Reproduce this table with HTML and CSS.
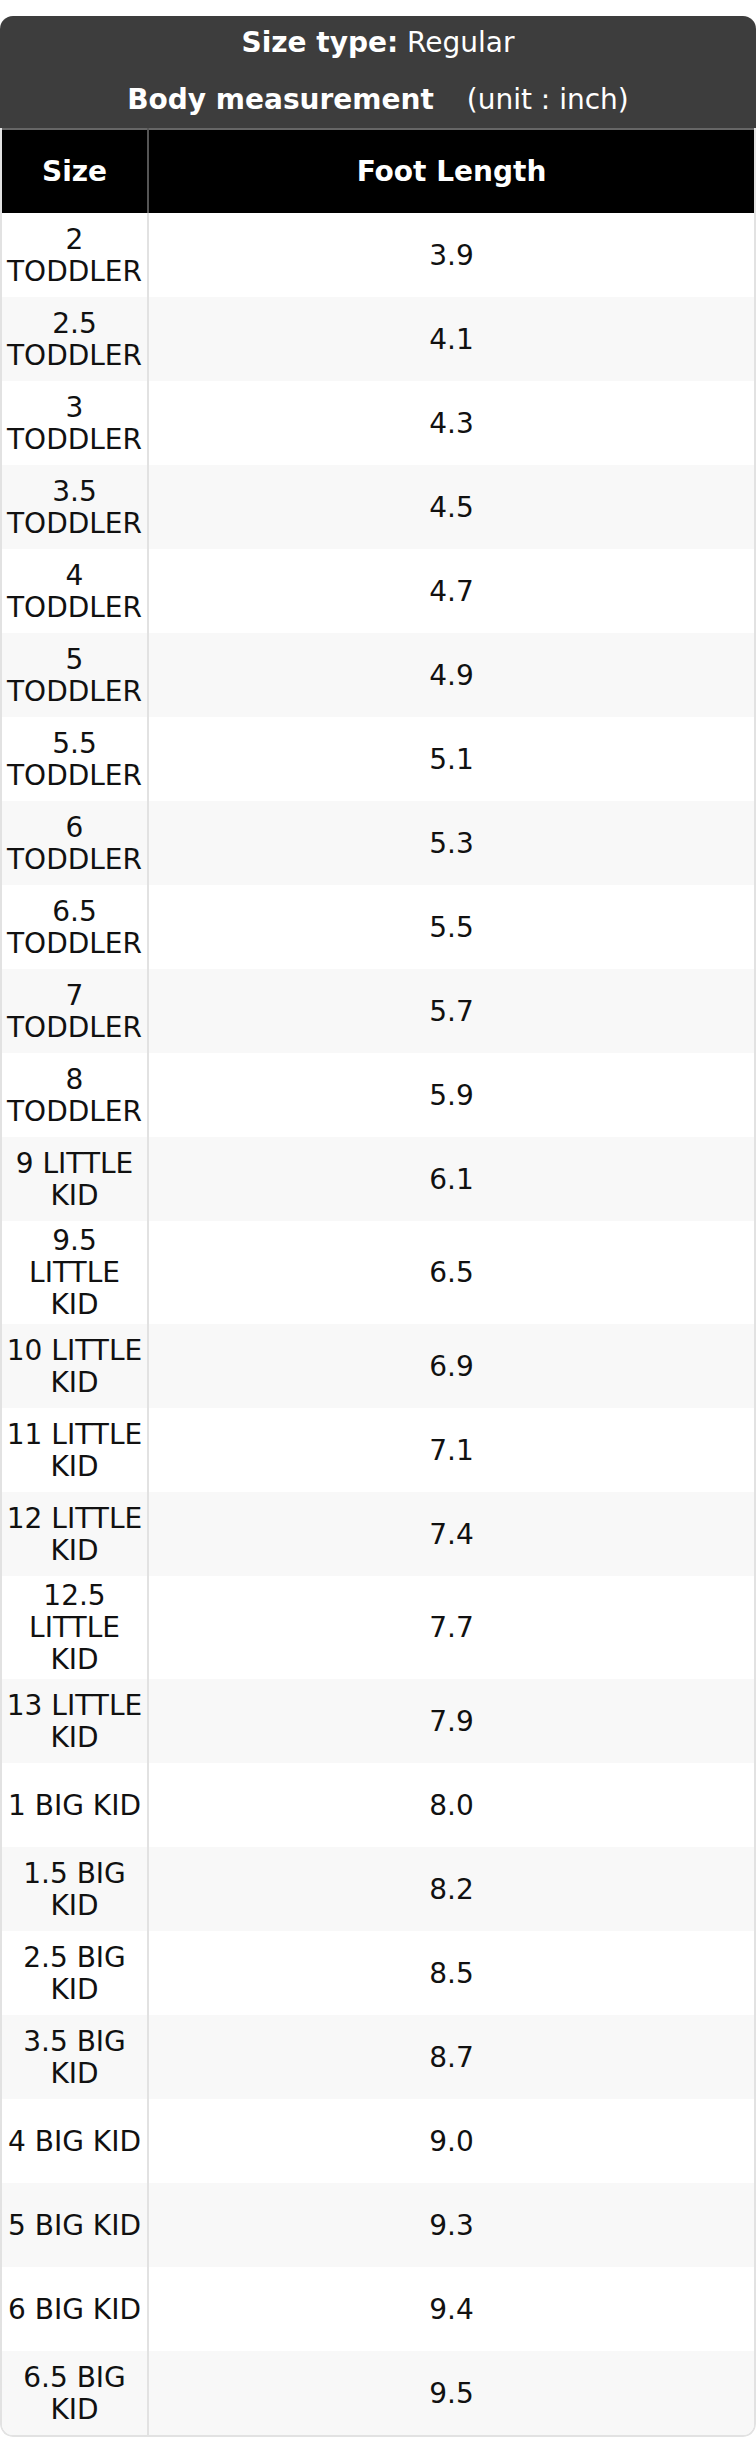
FILE: index.html
```html
<!DOCTYPE html>
<html lang="en">
<head>
<meta charset="utf-8">
<title>Size chart</title>
<link rel="stylesheet" href="styles.css">
</head>
<body>
<div class="card">
  <div class="title">
    <div class="title-line"><b>Size type:</b> Regular</div>
    <div class="title-line"><b>Body measurement</b> <span class="unit">(unit : inch)</span></div>
  </div>
  <div class="table-wrap">
    <table class="chart">
      <colgroup><col class="c-size"><col class="c-len"></colgroup>
      <thead>
        <tr><th>Size</th><th>Foot Length</th></tr>
      </thead>
      <tbody>
        <tr><td>2 TODDLER</td><td>3.9</td></tr>
        <tr><td>2.5 TODDLER</td><td>4.1</td></tr>
        <tr><td>3 TODDLER</td><td>4.3</td></tr>
        <tr><td>3.5 TODDLER</td><td>4.5</td></tr>
        <tr><td>4 TODDLER</td><td>4.7</td></tr>
        <tr><td>5 TODDLER</td><td>4.9</td></tr>
        <tr><td>5.5 TODDLER</td><td>5.1</td></tr>
        <tr><td>6 TODDLER</td><td>5.3</td></tr>
        <tr><td>6.5 TODDLER</td><td>5.5</td></tr>
        <tr><td>7 TODDLER</td><td>5.7</td></tr>
        <tr><td>8 TODDLER</td><td>5.9</td></tr>
        <tr><td>9 LITTLE KID</td><td>6.1</td></tr>
        <tr><td>9.5 LITTLE KID</td><td>6.5</td></tr>
        <tr><td>10 LITTLE KID</td><td>6.9</td></tr>
        <tr><td>11 LITTLE KID</td><td>7.1</td></tr>
        <tr><td>12 LITTLE KID</td><td>7.4</td></tr>
        <tr><td>12.5 LITTLE KID</td><td>7.7</td></tr>
        <tr><td>13 LITTLE KID</td><td>7.9</td></tr>
        <tr><td>1 BIG KID</td><td>8.0</td></tr>
        <tr><td>1.5 BIG KID</td><td>8.2</td></tr>
        <tr><td>2.5 BIG KID</td><td>8.5</td></tr>
        <tr><td>3.5 BIG KID</td><td>8.7</td></tr>
        <tr><td>4 BIG KID</td><td>9.0</td></tr>
        <tr><td>5 BIG KID</td><td>9.3</td></tr>
        <tr><td>6 BIG KID</td><td>9.4</td></tr>
        <tr><td>6.5 BIG KID</td><td>9.5</td></tr>
      </tbody>
    </table>
  </div>
</div>
</body>
</html>
```
FILE: styles.css
```css
html, body {
  margin: 0;
  padding: 0;
  background: #ffffff;
}
body {
  font-family: "DejaVu Sans", "Liberation Sans", sans-serif;
  font-size: 28px;
  color: #111;
}
.card {
  margin-top: 16px;
  width: 756px;
  border-radius: 13px;
  overflow: hidden;
}
.title {
  background: #3d3d3d;
  color: #fff;
  text-align: center;
  height: 112px;
  box-sizing: border-box;
  padding-top: 10px;
  display: flex;
  flex-direction: column;
  gap: 24px;
}
.title-line {
  line-height: 33px;
  white-space: nowrap;
}
.title-line b {
  font-weight: bold;
}
.unit {
  margin-left: 24px;
}
.table-wrap {
  border: 2px solid #e2e2e2;
  border-top: none;
  border-radius: 0 0 13px 13px;
  overflow: hidden;
}
.chart {
  width: 100%;
  border-collapse: collapse;
  table-layout: fixed;
}
.c-size { width: 146px; }
.chart th, .chart td {
  text-align: center;
  vertical-align: middle;
  padding: 0 4px;
  line-height: 32px;
}
.chart thead th {
  background: #000;
  color: #fff;
  font-weight: bold;
  height: 84px;
  border-top: 2px solid #666;
  box-sizing: border-box;
}
.chart thead th:first-child {
  border-right: 2px solid #555;
}
.chart tbody td {
  height: 84px;
  padding-top: 4px;
  padding-bottom: 3px;
  box-sizing: border-box;
  color: #111;
}
.chart tbody td:first-child {
  border-right: 2px solid #e2e2e2;
}
.chart tbody tr:nth-child(even) td {
  background: #f8f8f8;
}
```
